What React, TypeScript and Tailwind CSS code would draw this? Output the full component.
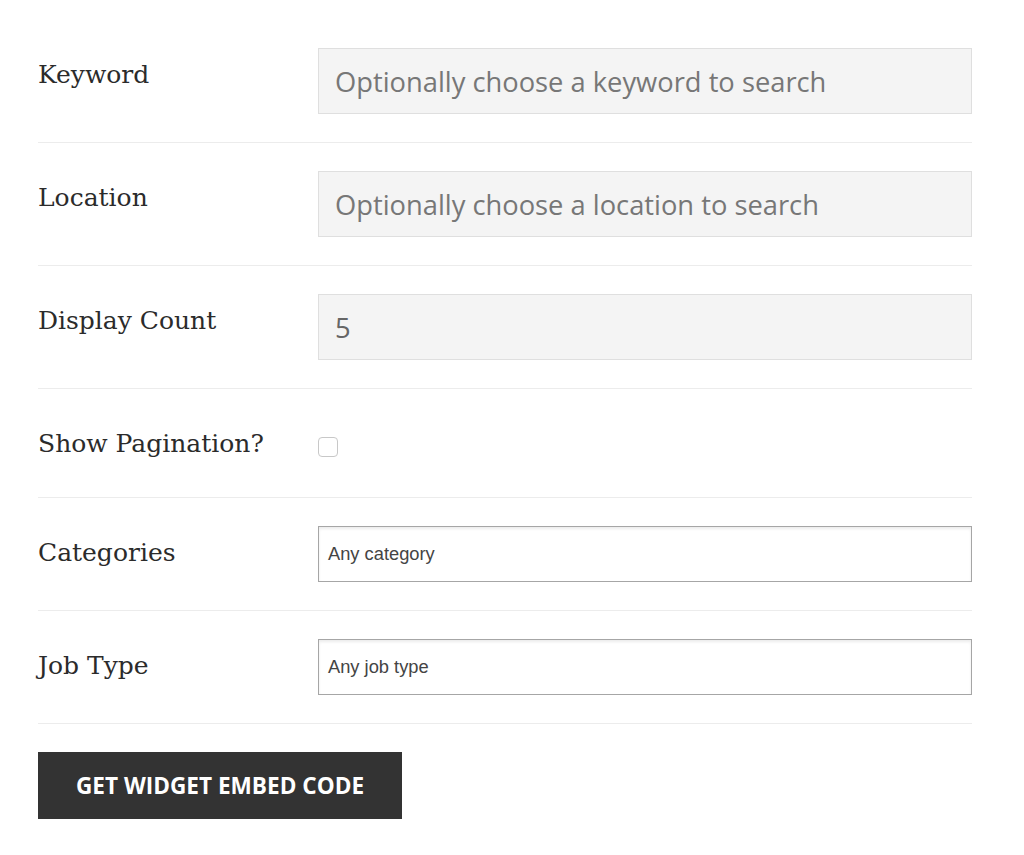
import React from "react";

const labelCls =
  "w-[280px] shrink-0 pt-[11px] text-[25px] leading-[32px] text-[#2b2b2b]";

const Row = ({ label, children }: { label: string; children: React.ReactNode }) => (
  <div className="flex py-[28px] border-b border-[#ececec]">
    <div className={labelCls} style={{ fontFamily: '"DejaVu Serif", serif' }}>
      {label}
    </div>
    <div className="flex-1">{children}</div>
  </div>
);

const textInput =
  "w-full h-[66px] bg-[#f4f4f4] border border-[#dfdfdf] px-[16px] text-[27.3px] text-[#666] placeholder:text-[#777] outline-none";

const selectBox =
  "w-full h-[56px] border border-[#a6a6a6] px-[9px] flex items-center text-[18.3px] text-[#444] shadow-[inset_0_2px_3px_rgba(0,0,0,0.08)]";

export default function App() {
  return (
    <div className="bg-white min-h-[855px] pt-[20px] pl-[38px] pr-[52px]">
      <form className="w-[934px]" onSubmit={(e) => e.preventDefault()}>
        <Row label="Keyword">
          <input
            type="text"
            placeholder="Optionally choose a keyword to search"
            className={textInput}
            style={{ fontFamily: '"Open Sans", sans-serif' }}
          />
        </Row>
        <Row label="Location">
          <input
            type="text"
            placeholder="Optionally choose a location to search"
            className={textInput}
            style={{ fontFamily: '"Open Sans", sans-serif' }}
          />
        </Row>
        <Row label="Display Count">
          <input
            type="text"
            defaultValue="5"
            className={textInput}
            style={{ fontFamily: '"Open Sans", sans-serif' }}
          />
        </Row>
        <Row label="Show Pagination?">
          <div className="h-[52px] pt-[20px]">
            <div className="w-[20px] h-[20px] rounded-[4px] border border-[#c8c8c8] bg-white" />
          </div>
        </Row>
        <Row label="Categories">
          <div className={selectBox} style={{ fontFamily: '"Liberation Sans", Arial, sans-serif' }}>
            Any category
          </div>
        </Row>
        <Row label="Job Type">
          <div className={selectBox} style={{ fontFamily: '"Liberation Sans", Arial, sans-serif' }}>
            Any job type
          </div>
        </Row>
        <div className="pt-[28px]">
          <button
            type="submit"
            className="w-[364px] h-[67px] bg-[#333] text-white font-bold text-[22.6px] uppercase"
            style={{ fontFamily: '"Open Sans", sans-serif' }}
          >
            Get Widget Embed Code
          </button>
        </div>
      </form>
    </div>
  );
}
